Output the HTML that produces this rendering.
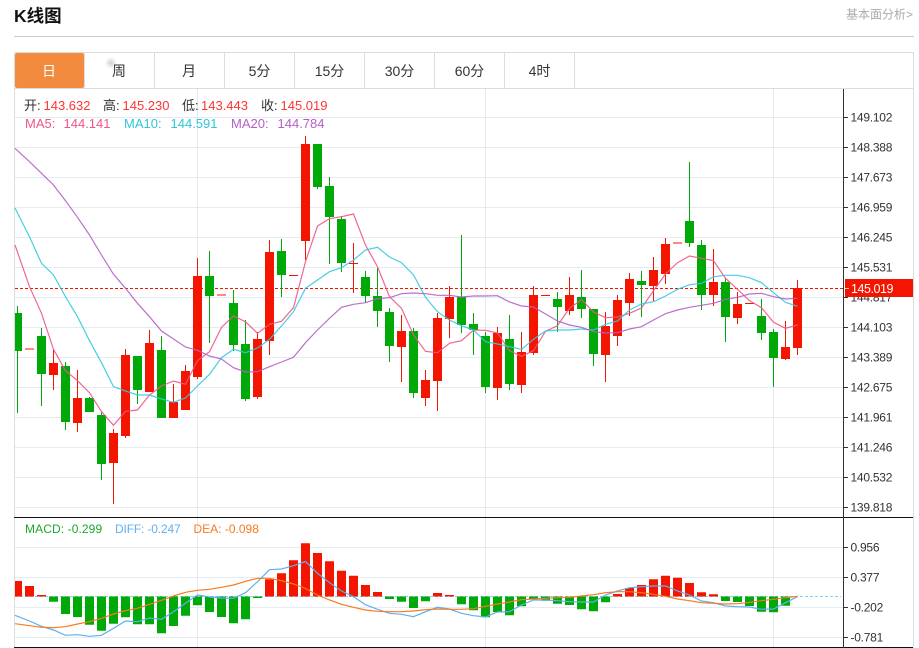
<!DOCTYPE html>
<html lang="zh"><head><meta charset="utf-8"><title>K线图</title>
<style>
html,body{margin:0;padding:0;background:#fff}
body{width:919px;height:648px;overflow:hidden;position:relative;font-family:"Liberation Sans","Noto Sans CJK SC",sans-serif}
svg{position:absolute;left:0;top:0}
text{font-family:"Liberation Sans","Noto Sans CJK SC",sans-serif}
.t{font-size:14px;fill:#333;text-anchor:middle}
.a{font-size:12px;fill:#333;letter-spacing:-.25px}
.l{font-size:13px}
</style></head><body>
<svg width="919" height="648" viewBox="0 0 919 648">
<defs><radialGradient id="g"><stop offset="0" stop-color="#bbb" stop-opacity=".7"/><stop offset="1" stop-color="#bbb" stop-opacity="0"/></radialGradient></defs>
<text x="14" y="22" font-size="17.5" font-weight="700" fill="#111">K线图</text>
<text x="846" y="18.5" font-size="12" fill="#aaa">基本面分析&gt;</text>
<path d="M14 36.5H914" stroke="#ccc" fill="none"/>

<!-- frame -->
<path d="M14.5 52.5H913.5V648M14.5 52.5V648M14.5 88.5H913.5" stroke="#ddd" fill="none"/>
<path d="M84.5 53V88M154.5 53V88M224.5 53V88M294.5 53V88M364.5 53V88M434.5 53V88M504.5 53V88M574.5 53V88" stroke="#ddd" fill="none"/>
<rect x="15" y="53" width="69" height="35" rx="2" fill="#f38b3f"/>
<circle cx="111" cy="63" r="6" fill="url(#g)"/>
<text class="t" x="49" y="76" style="fill:#fff">日</text>
<text class="t" x="119" y="76">周</text>
<text class="t" x="189" y="76">月</text>
<text class="t" x="259.500" y="76">5分</text>
<text class="t" x="329.500" y="76">15分</text>
<text class="t" x="399.500" y="76">30分</text>
<text class="t" x="469.500" y="76">60分</text>
<text class="t" x="539.500" y="76">4时</text>

<!-- grid -->
<path d="M15 117.500H843M15 147.500H843M15 177.500H843M15 207.500H843M15 237.500H843M15 267.500H843M15 297.500H843M15 327.500H843M15 357.500H843M15 387.500H843M15 417.500H843M15 447.500H843M15 477.500H843M15 507.500H843M15 547.500H843M15 577.500H843M15 607.500H843M15 637.500H843M197.500 89V517M485.500 89V517M773.500 89V517M197.500 518V647M485.500 518V647M773.500 518V647" stroke="#e4ebf2" fill="none"/>

<!-- price line -->
<path d="M15 288.500H843" stroke="#f41500" stroke-dasharray="3 2" fill="none"/>

<!-- candles -->
<path stroke="#f41500" fill="none" d="M53.500 349V390M77.500 370V432M113.500 429V504M125.500 349V438M149.500 330V392M173.500 384V418M185.500 365V410M197.500 258V379M257.500 332V399M269.500 240V355M305.500 136V260M353.500 243V293M401.500 315V382M425.500 370V406M437.500 313V411M449.500 286V338M497.500 327V400M521.500 332V393M533.500 286V355M569.500 277V315M605.500 312V382M617.500 295V346M629.500 273V316M653.500 257V301M665.500 238V284M713.500 249V306M737.500 292V324M785.500 321V360M797.500 280V355"/>
<path stroke="#00a808" fill="none" d="M17.500 306V413M41.500 328V406M65.500 362V430M89.500 397V412M101.500 412V480M137.500 356V404M161.500 336V418M209.500 251V343M233.500 290V351M245.500 320V401M281.500 239V297M317.500 144V189M329.500 177V264M341.500 216V272M365.500 271V303M377.500 268V327M389.500 308V362M413.500 328V398M461.500 235V333M473.500 313V355M485.500 332V393M509.500 315V390M557.500 292V332M581.500 270V318M593.500 309V366M641.500 271V317M689.500 162V247M701.500 240V310M725.500 278V342M761.500 299V340M773.500 329V387"/>
<path fill="#f41500" d="M49 363h9v12h-9zM73 398h9v25h-9zM109 433h9v30h-9zM121 355h9v81h-9zM145 343h9v49h-9zM169 402h9v16h-9zM181 371h9v39h-9zM193 276h9v101h-9zM253 339h9v58h-9zM265 252h9v89h-9zM301 144h9v97h-9zM397 331h9v16h-9zM421 380h9v18h-9zM433 318h9v63h-9zM445 297h9v22h-9zM493 333h9v55h-9zM517 352h9v33h-9zM529 295h9v58h-9zM565 295h9v16h-9zM601 326h9v29h-9zM613 300h9v36h-9zM625 279h9v24h-9zM649 270h9v16h-9zM661 244h9v30h-9zM709 282h9v13h-9zM733 304h9v14h-9zM781 347h9v12h-9zM793 288h9v60h-9zM289 275h9v1h-9zM349 263h9v1h-9zM541 295h9v1h-9zM745 303h9v1h-9z"/>
<path fill="#f88" d="M25 348h9v2h-9zM217 294h9v2h-9zM673 242h9v2h-9z"/>
<path fill="#00a808" d="M15 313h7v38h-7zM37 336h9v38h-9zM61 366h9v56h-9zM85 398h9v14h-9zM97 415h9v49h-9zM133 356h9v34h-9zM157 350h9v68h-9zM205 276h9v20h-9zM229 303h9v42h-9zM241 344h9v55h-9zM277 251h9v24h-9zM313 144h9v43h-9zM325 186h9v31h-9zM337 219h9v44h-9zM361 277h9v19h-9zM373 296h9v15h-9zM385 312h9v34h-9zM409 331h9v62h-9zM457 297h9v28h-9zM469 324h9v6h-9zM481 336h9v51h-9zM505 339h9v45h-9zM553 299h9v8h-9zM577 297h9v12h-9zM589 309h9v45h-9zM637 281h9v4h-9zM685 221h9v22h-9zM697 245h9v50h-9zM721 282h9v35h-9zM757 316h9v17h-9zM769 332h9v26h-9z"/>

<!-- MA lines -->
<g fill="none" stroke-width="1.2" stroke-opacity=".9">
<polyline stroke="#f0558a" points="15,245 29.500,286.700 41.500,313.300 53.500,349.300 65.500,370.700 77.500,380.700 89.500,392.700 101.500,411.700 113.500,425.300 125.500,411.300 137.500,410 149.500,395 161.500,386 173.500,381 185.500,384.300 197.500,360.700 209.500,351.700 221.500,327.300 233.500,316 245.500,321.700 257.500,333.300 269.500,324.300 281.500,321.300 293.500,307.700 305.500,261.700 317.500,226 329.500,218.700 341.500,216.700 353.500,214 365.500,245 377.500,266.700 389.500,296.700 401.500,308.300 413.500,335 425.500,351.300 437.500,352.700 449.500,343.300 461.500,340.700 473.500,330 485.500,330.300 497.500,333 509.500,350.700 521.500,356.300 533.500,350.700 545.500,331.300 557.500,325.700 569.500,308.300 581.500,299.700 593.500,312 605.500,317.700 617.500,317 629.500,313.300 641.500,308 653.500,290.700 665.500,274 677.500,262.700 689.500,256 701.500,258.300 713.500,260.700 725.500,278.300 737.500,289.300 749.500,300.700 761.500,307.700 773.500,322.300 785.500,328.300 797.500,325"/>
<polyline stroke="#35c8e0" points="15,208 29.500,236.700 41.500,263.300 53.500,275 65.500,296.700 77.500,316.700 89.500,340.700 101.500,362.700 113.500,386.700 125.500,391 137.500,395 149.500,395 161.500,399 173.500,402.300 185.500,398 197.500,386 209.500,374.300 221.500,357.700 233.500,349.300 245.500,352.700 257.500,348 269.500,339.300 281.500,326 293.500,311.700 305.500,288.300 317.500,280 329.500,271.700 341.500,267.700 353.500,260 365.500,250 377.500,247.300 389.500,257 401.500,262.700 413.500,275 425.500,297.300 437.500,311.700 449.500,320 461.500,325.700 473.500,330 485.500,341.700 497.500,344 509.500,346.700 521.500,349.300 533.500,339.300 545.500,331 557.500,330 569.500,330 581.500,329 593.500,330 605.500,324.300 617.500,321 629.500,310 641.500,304 653.500,301.700 665.500,296 677.500,289.300 689.500,284.700 701.500,283.300 713.500,276.700 725.500,275.300 737.500,275.300 749.500,277.700 761.500,282.700 773.500,292.700 785.500,302.300 797.500,306.300"/>
<polyline stroke="#b45fc8" points="15,148.300 29.500,161.700 41.500,173.300 53.500,185 65.500,200.700 77.500,217.300 89.500,235 101.500,255 113.500,274.300 125.500,288.300 137.500,303.300 149.500,316.700 161.500,331 173.500,339 185.500,347 197.500,350.300 209.500,356 221.500,359 233.500,367.700 245.500,372 257.500,371.700 269.500,366.700 281.500,362 293.500,357.300 305.500,342.700 317.500,330 329.500,318.300 341.500,307.300 353.500,304.300 365.500,302.700 377.500,298.700 389.500,297.700 401.500,293.700 413.500,293 425.500,293.700 437.500,295.300 449.500,295.300 461.500,297 473.500,296 485.500,296 497.500,295.700 509.500,302 521.500,306 533.500,307 545.500,314 557.500,321 569.500,325 581.500,327.300 593.500,331.700 605.500,333 617.500,332.700 629.500,329 641.500,326.700 653.500,320 665.500,313.700 677.500,310 689.500,307.300 701.500,305.300 713.500,303.300 725.500,299.300 737.500,297.300 749.500,294 761.500,293.300 773.500,296.700 785.500,299 797.500,298.300"/>
</g>

<!-- MACD -->
<path d="M15 596.500H841" stroke="#7fd4f0" stroke-dasharray="3 2" fill="none"/>
<path fill="#f41500" d="M15 581h7v15.500h-7zM25 586h9v10.500h-9zM37 595h9v1.500h-9zM265 579.300h9v17.200h-9zM277 573.300h9v23.200h-9zM289 560.300h9v36.200h-9zM301 543.300h9v53.200h-9zM313 553h9v43.500h-9zM325 561.300h9v35.200h-9zM337 570.700h9v25.800h-9zM349 575.700h9v20.800h-9zM361 585h9v11.500h-9zM373 592h9v4.500h-9zM433 593h9v3.500h-9zM445 595h9v1.500h-9zM613 594h9v2.500h-9zM625 588h9v8.500h-9zM637 585h9v11.500h-9zM649 579.300h9v17.200h-9zM661 575.700h9v20.800h-9zM673 577.700h9v18.800h-9zM685 583h9v13.500h-9zM697 592.300h9v4.200h-9zM709 594.300h9v2.200h-9z"/>
<path fill="#00a808" d="M49 596.500h9v5.200h-9zM61 596.500h9v17.500h-9zM73 596.500h9v20.500h-9zM85 596.500h9v28.200h-9zM97 596.500h9v34.200h-9zM109 596.500h9v27.200h-9zM121 596.500h9v20.800h-9zM133 596.500h9v27.800h-9zM145 596.500h9v27.800h-9zM157 596.500h9v36.800h-9zM169 596.500h9v29.500h-9zM181 596.500h9v19.200h-9zM193 596.500h9v8.800h-9zM205 596.500h9v15.500h-9zM217 596.500h9v20.500h-9zM229 596.500h9v26.800h-9zM241 596.500h9v22.800h-9zM253 596.500h9v1.500h-9zM385 596.500h9v2.500h-9zM397 596.500h9v5.200h-9zM409 596.500h9v11.500h-9zM421 596.500h9v4.800h-9zM457 596.500h9v7.800h-9zM469 596.500h9v13.800h-9zM481 596.500h9v20.800h-9zM493 596.500h9v15.500h-9zM505 596.500h9v18.800h-9zM517 596.500h9v9.800h-9zM529 596.500h9v2.500h-9zM541 596.500h9v4.200h-9zM553 596.500h9v7.200h-9zM565 596.500h9v8.500h-9zM577 596.500h9v12.800h-9zM589 596.500h9v14.800h-9zM601 596.500h9v5.800h-9zM721 596.500h9v4.500h-9zM733 596.500h9v5.500h-9zM745 596.500h9v9.500h-9zM757 596.500h9v15.200h-9zM769 596.500h9v15.800h-9zM781 596.500h9v9.200h-9z"/>
<g fill="none" stroke-width="1.2">
<polyline stroke="#5fb0f0" points="15,615.300 29.500,621 41.500,626.300 53.500,630 65.500,635.300 77.500,634.700 89.500,636.300 101.500,635.300 113.500,628.300 125.500,621 137.500,621.700 149.500,618 161.500,619.300 173.500,611.700 185.500,603.300 197.500,595 209.500,597 221.500,598 233.500,598.300 245.500,592.700 257.500,581.700 269.500,569.700 281.500,569 293.500,565.700 305.500,561.500 317.500,573.300 329.500,582.700 341.500,591 353.500,596.700 365.500,604.700 377.500,609.300 389.500,613.300 401.500,614.300 413.500,616.700 425.500,611.700 437.500,607.300 449.500,609 461.500,613.300 473.500,615.700 485.500,617 497.500,612 509.500,611.700 521.500,605 533.500,600 545.500,600 557.500,600.700 569.500,601.700 581.500,602 593.500,602 605.500,595 617.500,591 629.500,587.700 641.500,586.700 653.500,586 665.500,586 677.500,591 689.500,595 701.500,601 713.500,602.700 725.500,606 737.500,606.700 749.500,607 761.500,609.300 773.500,609 785.500,602.700 797.500,596.700"/>
<polyline stroke="#f87a20" points="15,623.700 29.500,625.700 41.500,627.300 53.500,627.700 65.500,626.700 77.500,624 89.500,621.700 101.500,618.300 113.500,614 125.500,610.700 137.500,608.300 149.500,604.300 161.500,600.300 173.500,596 185.500,592.300 197.500,590.300 209.500,589.300 221.500,587.300 233.500,585 245.500,581.300 257.500,578.300 269.500,578.300 281.500,580.700 293.500,584 305.500,588.500 317.500,595 329.500,600 341.500,604.300 353.500,607.300 365.500,610 377.500,611.300 389.500,611.700 401.500,611.700 413.500,611 425.500,609.700 437.500,609 449.500,609.300 461.500,609.300 473.500,608.700 485.500,606.300 497.500,604 509.500,602 521.500,599.700 533.500,599 545.500,598.300 557.500,597.700 569.500,597.300 581.500,596 593.500,594.700 605.500,592.700 617.500,591.700 629.500,591.700 641.500,592.700 653.500,594.300 665.500,596.300 677.500,599 689.500,600.700 701.500,602.700 713.500,603.300 725.500,604 737.500,603.700 749.500,602.300 761.500,600.700 773.500,599.300 785.500,597.700 797.500,596.300"/>
</g>

<!-- pane separators and axis -->
<path d="M14 517.500H913M14 647.500H913" stroke="#111" fill="none"/>
<path d="M843.500 89V648" stroke="#333" fill="none"/>
<path d="M844 117.500h4M844 147.500h4M844 177.500h4M844 207.500h4M844 237.500h4M844 267.500h4M844 297.500h4M844 327.500h4M844 357.500h4M844 387.500h4M844 417.500h4M844 447.500h4M844 477.500h4M844 507.500h4M844 547.500h4M844 577.500h4M844 607.500h4M844 637.500h4" stroke="#333" fill="none"/>
<g>
<text class="a" x="850.500" y="121.500">149.102</text>
<text class="a" x="850.500" y="151.500">148.388</text>
<text class="a" x="850.500" y="181.500">147.673</text>
<text class="a" x="850.500" y="211.500">146.959</text>
<text class="a" x="850.500" y="241.500">146.245</text>
<text class="a" x="850.500" y="271.500">145.531</text>
<text class="a" x="850.500" y="301.500">144.817</text>
<text class="a" x="850.500" y="331.500">144.103</text>
<text class="a" x="850.500" y="361.500">143.389</text>
<text class="a" x="850.500" y="391.500">142.675</text>
<text class="a" x="850.500" y="421.500">141.961</text>
<text class="a" x="850.500" y="451.500">141.246</text>
<text class="a" x="850.500" y="481.500">140.532</text>
<text class="a" x="850.500" y="511.500">139.818</text>
<text class="a" x="850.500" y="551.500">0.956</text>
<text class="a" x="850.500" y="581.500">0.377</text>
<text class="a" x="850.500" y="611.500">-0.202</text>
<text class="a" x="850.500" y="641.500">-0.781</text>
</g>
<rect x="845" y="279" width="68" height="18" fill="#f41500"/>
<path d="M845 288.500h4" stroke="#fbb"/>
<text x="851" y="293" font-size="12.500" letter-spacing="-.45" fill="#fff">145.019</text>

<!-- legends -->
<g class="l" font-size="13">
<text x="24" y="110" fill="#333">开:</text><text x="43.500" y="110" fill="#f33">143.632</text>
<text x="103" y="110" fill="#333">高:</text><text x="122.500" y="110" fill="#f33">145.230</text>
<text x="182" y="110" fill="#333">低:</text><text x="201" y="110" fill="#f33">143.443</text>
<text x="261" y="110" fill="#333">收:</text><text x="280.500" y="110" fill="#f33">145.019</text>
<text x="25" y="128" fill="#f0558a">MA5:</text><text x="63.500" y="128" fill="#f0558a">144.141</text>
<text x="124" y="128" fill="#2fc6dc">MA10:</text><text x="170.500" y="128" fill="#2fc6dc">144.591</text>
<text x="231" y="128" fill="#b45fc8">MA20:</text><text x="277.500" y="128" fill="#b45fc8">144.784</text>
<text x="25" y="533" font-size="12" letter-spacing=".1" fill="#1aa82a">MACD: -0.299</text>
<text x="115" y="533" font-size="12" letter-spacing="-.15" fill="#5fb0f0">DIFF: -0.247</text>
<text x="193.500" y="533" font-size="12" fill="#f87a20">DEA: -0.098</text>
</g>
</svg>
</body></html>
